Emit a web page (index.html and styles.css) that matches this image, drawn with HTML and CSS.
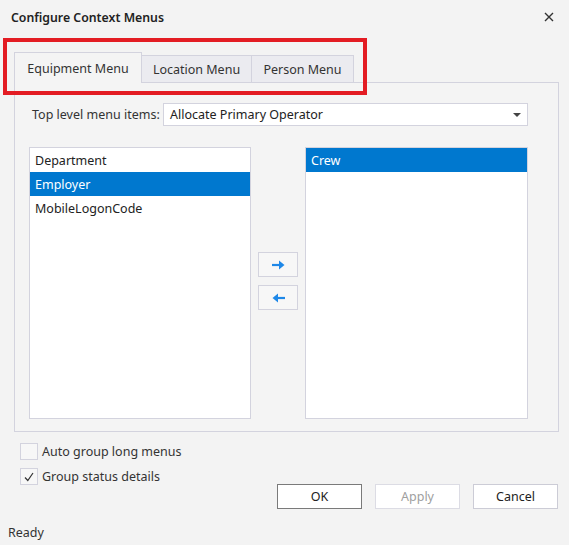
FILE: index.html
```html
<!DOCTYPE html>
<html>
<head>
<meta charset="utf-8">
<link rel="stylesheet" href="styles.css">
</head>
<body>
<div class="dialog">
  <div class="titlebar">
    <span class="title">Configure Context Menus</span>
    <svg class="close" width="10" height="10" viewBox="0 0 10 10"><path d="M1 1L9 9M9 1L1 9" stroke="#333" stroke-width="1.4"/></svg>
  </div>
  <div class="tabs">
    <div class="tab active">Equipment Menu</div>
    <div class="tab">Location Menu</div>
    <div class="tab">Person Menu</div>
    <div class="highlight"></div>
  </div>
  <div class="panel">
    <div class="toprow">
      <span class="label">Top level menu items:</span>
      <div class="combo">
        <span>Allocate Primary Operator</span>
        <svg width="8" height="4" viewBox="0 0 8 4"><path d="M0 0H8L4 4Z" fill="#444"/></svg>
      </div>
    </div>
    <div class="lists">
      <div class="list">
        <div class="item">Department</div>
        <div class="item sel">Employer</div>
        <div class="item">MobileLogonCode</div>
      </div>
      <div class="movers">
        <div class="mbtn"><svg width="15" height="12" viewBox="0 0 15 12"><path d="M1 6H11" stroke="#1e88e8" stroke-width="2.2"/><path d="M8 1.5L13.5 6L8 10.5Z" fill="#1e88e8"/></svg></div>
        <div class="mbtn"><svg width="15" height="12" viewBox="0 0 15 12"><path d="M4 6H14" stroke="#1e88e8" stroke-width="2.2"/><path d="M7 1.5L1.5 6L7 10.5Z" fill="#1e88e8"/></svg></div>
      </div>
      <div class="list">
        <div class="item sel">Crew</div>
      </div>
    </div>
  </div>
  <div class="footer">
    <div class="checks">
      <div class="check"><span class="box"></span><span>Auto group long menus</span></div>
      <div class="check"><span class="box"><svg width="12" height="12" viewBox="0 0 12 12"><path d="M2 6.5L4.8 9.5L10 2" fill="none" stroke="#333" stroke-width="1.2"/></svg></span><span>Group status details</span></div>
    </div>
    <div class="buttons">
      <div class="btn default">OK</div>
      <div class="btn disabled">Apply</div>
      <div class="btn">Cancel</div>
    </div>
  </div>
  <div class="status">Ready</div>
</div>
</body>
</html>
```
FILE: styles.css
```css
html, body {
  margin: 0;
  padding: 0;
  background: #f3f3f3;
}
body {
  font-family: "Noto Sans", "Open Sans", sans-serif;
  font-size: 12.5px;
  color: #222;
}
.dialog {
  width: 569px;
  height: 545px;
  display: flex;
  flex-direction: column;
  overflow: hidden;
}
.titlebar {
  height: 34px;
  display: flex;
  align-items: center;
  justify-content: space-between;
  padding: 0 15px 0 11px;
}
.title {
  font-weight: 600;
  font-size: 12.3px;
  color: #222;
}
.close { display: block; }
.tabs {
  position: relative;
  display: flex;
  align-items: flex-end;
  height: 48px;
  margin-left: 14px;
}
.tab {
  box-sizing: border-box;
  height: 27px;
  border: 1px solid #d3d3de;
  border-bottom: none;
  background: #ebebf0;
  display: flex;
  align-items: center;
  justify-content: center;
  color: #333;
  padding-top: 1px;
}
.tab:nth-child(2) { width: 110px; border-left: none; }
.tab:nth-child(3) { width: 102px; border-left: none; }
.tab.active {
  width: 128px;
  height: 31px;
  margin-bottom: -1px;
  background: #f4f4f4;
  position: relative;
  z-index: 1;
  padding-top: 0;
}
.highlight {
  position: absolute;
  left: -11px;
  top: 4px;
  width: 364px;
  height: 57px;
  box-sizing: border-box;
  border: 4px solid #e31c23;
  z-index: 2;
}
.panel {
  box-sizing: border-box;
  margin-left: 14px;
  width: 545px;
  height: 350px;
  border: 1px solid #d3d3de;
  background: #f4f4f4;
  padding: 20px 30px 0 14px;
}
.toprow {
  display: flex;
  align-items: center;
  height: 23px;
}
.label {
  margin-left: 3px;
  width: 131px;
  white-space: nowrap;
  color: #333;
}
.combo {
  flex: 1;
  box-sizing: border-box;
  height: 23px;
  background: #fff;
  border: 1px solid #d3d3de;
  display: flex;
  align-items: center;
  justify-content: space-between;
  padding: 0 6px 0 6px;
}
.combo svg { display: block; }
.lists {
  display: flex;
  margin-top: 21px;
  height: 272px;
}
.list {
  box-sizing: border-box;
  width: 222px;
  height: 272px;
  background: #fff;
  border: 1px solid #d3d3de;
}
.list:last-child { width: 223px; }
.item {
  height: 24px;
  display: flex;
  align-items: center;
  padding-left: 5px;
  color: #222;
}
.item.sel {
  background: #0078cf;
  color: #fff;
}
.movers {
  width: 54px;
  display: flex;
  flex-direction: column;
  align-items: center;
  justify-content: center;
  gap: 8px;
  padding-bottom: 4px;
}
.mbtn {
  box-sizing: border-box;
  width: 40px;
  height: 25px;
  border: 1px solid #d3d3de;
  background: #f7f7f7;
  display: flex;
  align-items: center;
  justify-content: center;
}
.mbtn svg { display: block; }
.footer {
  display: flex;
  justify-content: space-between;
  align-items: flex-start;
  padding: 11px 11px 0 20px;
  height: 88px;
  box-sizing: border-box;
}
.checks {
  display: flex;
  flex-direction: column;
  gap: 8px;
}
.check {
  display: flex;
  align-items: center;
  height: 17px;
  color: #333;
}
.box {
  box-sizing: border-box;
  width: 18px;
  height: 17px;
  border: 1px solid #d3d3de;
  background: #f7f7f7;
  margin-right: 4px;
  display: flex;
  align-items: center;
  justify-content: center;
}
.buttons {
  display: flex;
  gap: 13px;
  margin-top: 41px;
}
.btn {
  box-sizing: border-box;
  width: 85px;
  height: 25px;
  border: 1px solid #ccccd6;
  background: #fff;
  display: flex;
  align-items: center;
  justify-content: center;
  color: #222;
}
.btn.default { border: 1px solid #7a7a7a; }
.btn.disabled { color: #a0a0a0; border-color: #dcdce4; }
.status {
  padding-left: 8px;
  height: 25px;
  display: flex;
  align-items: center;
  color: #333;
}
```
